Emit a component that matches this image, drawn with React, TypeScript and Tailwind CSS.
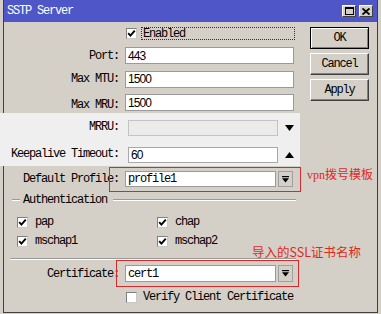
import React from "react";

const lbl = "text-[12px] tracking-[-1.2px] leading-none text-black whitespace-nowrap";

function Box({ checked = true }: { checked?: boolean }) {
  return (
    <span className="w-[11px] h-[11px] shrink-0 bg-white border border-t-[#808080] border-l-[#808080] border-b-[#c8c8c8] border-r-[#c8c8c8] flex items-center justify-center">
      {checked && (
        <svg width="9" height="9" viewBox="0 0 9 9">
          <path d="M1.2 4.2 L3.4 6.6 L7.8 1.6" fill="none" stroke="#000" strokeWidth="1.9" />
        </svg>
      )}
    </span>
  );
}

function DropBtn({ h }: { h: string }) {
  return (
    <div className={`ml-[2px] w-[15px] ${h} bg-[#d4d0c8] border border-[#a0a0a0] flex items-center justify-center`}>
      <svg width="7" height="7" viewBox="0 0 7 7">
        <rect x="0" y="0" width="7" height="1.2" fill="#000" />
        <path d="M0 2.3 H7 L3.5 6.5 Z" fill="#000" />
      </svg>
    </div>
  );
}

function Etched({ cls }: { cls: string }) {
  return <div className={`h-[2px] border-t border-t-[#9a9a9a] border-b border-b-white ${cls}`} />;
}

export default function App() {
  return (
    <div className="relative w-[381px] h-[314px] overflow-hidden bg-[#d4d0c8] font-['Liberation_Mono','Noto_Sans_CJK_SC',monospace]">
      <div className="ml-[3px] w-[375px] h-[313px] border-l border-r border-b border-[#404040] bg-[#d4d0c8] flex flex-col">
        {/* title bar */}
        <div className="h-[22px] bg-[#4f57c8] flex items-center justify-between pl-[3px] pr-[4px]">
          <span className="text-white text-[12px] tracking-[-1.2px] leading-none">SSTP Server</span>
          <div className="flex gap-[3px]">
            <div className="w-[14px] h-[12px] bg-[#d4d0c8] border border-t-white border-l-white border-b-[#404040] border-r-[#404040] flex items-center justify-center">
              <svg width="9" height="8" viewBox="0 0 9 8">
                <rect x="0.5" y="0.5" width="8" height="7" fill="none" stroke="#000" />
                <rect x="0" y="0" width="9" height="2" fill="#000" />
              </svg>
            </div>
            <div className="w-[14px] h-[12px] bg-[#d4d0c8] border border-t-white border-l-white border-b-[#404040] border-r-[#404040] flex items-center justify-center">
              <svg width="8" height="7" viewBox="0 0 8 7">
                <path d="M0.5 0.5 L7.5 6.5 M7.5 0.5 L0.5 6.5" stroke="#000" strokeWidth="1.8" />
              </svg>
            </div>
          </div>
        </div>

        {/* body */}
        <div className="flex flex-1">
          {/* form column */}
          <div className="w-[306px] flex flex-col">
            <div className="mt-[1px] h-[21px] flex items-center pl-[122px]">
              <Box />
              <div className="ml-[4px] w-[154px] h-[13px] border border-dotted border-[#333] flex items-center pl-[1px]">
                <span className={lbl}>Enabled</span>
              </div>
            </div>

            {[
              ["Port:", "443", "h-[23px] items-center"],
              ["Max MTU:", "1500", "h-[24px] items-center"],
              ["Max MRU:", "1500", "h-[22px] items-end pb-[2px]"],
            ].map(([l, v, c]) => (
              <div key={l} className={`flex ${c}`}>
                <span className={`${lbl} w-[115px] text-right`}>{l}</span>
                <div className="ml-[6px] w-[169px] h-[17px] bg-white border border-[#9a9a9a] flex items-center pl-[2px]">
                  <span className="font-['Liberation_Sans',sans-serif] text-[12px] tracking-[-0.9px] leading-none">{v}</span>
                </div>
              </div>
            ))}

            {/* lighter pasted region */}
            <div className="-ml-[4px] w-[300px] h-[53px] bg-[#efefef] flex flex-col relative">
              <div className="h-[27px] flex items-end pb-[4px]">
                <span className={`${lbl} w-[119px] text-right pb-[3px]`}>MRRU:</span>
                <div className="ml-[9px] w-[150px] h-[16px] bg-[#ebebeb] border border-[#c4c4c4]" />
                <div className="w-[22px] h-[16px] flex items-center justify-center">
                  <svg width="9" height="6" viewBox="0 0 9 6">
                    <path d="M0 0 H9 L4.5 6 Z" fill="#000" />
                  </svg>
                </div>
              </div>
              <div className="h-[26px] flex items-end pb-[3px]">
                <span className={`${lbl} w-[119px] text-right pb-[3px]`}>Keepalive Timeout:</span>
                <div className="ml-[9px] w-[150px] h-[16px] bg-white border border-[#a8a8a8] flex items-center pl-[2px]">
                  <span className="font-['Liberation_Sans',sans-serif] text-[12px] tracking-[-0.9px] leading-none">60</span>
                </div>
                <div className="w-[22px] h-[16px] flex items-center justify-center">
                  <svg width="9" height="6" viewBox="0 0 9 6">
                    <path d="M0 6 H9 L4.5 0 Z" fill="#000" />
                  </svg>
                </div>
              </div>
            </div>

            <div className="h-[26px] flex items-center">
              <span className={`${lbl} w-[115px] text-right`}>Default Profile:</span>
              <div className="ml-[6px] w-[151px] h-[16px] bg-white border border-[#9a9a9a] flex items-center pl-[2px]">
                <span className={lbl}>profile1</span>
              </div>
              <DropBtn h="h-[16px]" />
            </div>

            <div className="h-[16px] flex items-center pl-[8px] pr-[14px]">
              <Etched cls="w-[8px]" />
              <span className={`${lbl} ml-[3px]`}>Authentication</span>
              <Etched cls="ml-[6px] flex-1" />
            </div>

            <div className="mt-[4px] pl-[13px] grid grid-cols-[140px_1fr] grid-rows-[20px_18px]">
              {["pap", "chap", "mschap1", "mschap2"].map((t) => (
                <div key={t} className="flex items-center">
                  <Box />
                  <span className={`${lbl} ml-[7px]`}>{t}</span>
                </div>
              ))}
            </div>

            <Etched cls="mt-[8px] ml-[6px] mr-[14px]" />

            <div className="h-[27px] flex items-center">
              <span className={`${lbl} w-[115px] text-right`}>Certificate:</span>
              <div className="ml-[6px] w-[151px] h-[17px] bg-white border border-[#9a9a9a] flex items-center pl-[2px]">
                <span className={lbl}>cert1</span>
              </div>
              <DropBtn h="h-[17px]" />
            </div>

            <div className="h-[20px] flex items-center pl-[122px]">
              <Box checked={false} />
              <span className={`${lbl} ml-[6px]`}>Verify Client Certificate</span>
            </div>
          </div>

          {/* buttons column */}
          <div className="pt-[5px] flex flex-col gap-[4px]">
            <div className="w-[59px] h-[22px] border border-black bg-[#d4d0c8] shadow-[inset_1px_1px_#fff,inset_-1px_-1px_#808080] flex items-center justify-center">
              <span className={lbl}>OK</span>
            </div>
            {["Cancel", "Apply"].map((b) => (
              <div key={b} className="w-[59px] h-[22px] border border-t-white border-l-white border-b-[#404040] border-r-[#404040] bg-[#d4d0c8] shadow-[inset_-1px_-1px_#808080] flex items-center justify-center">
                <span className={lbl}>{b}</span>
              </div>
            ))}
          </div>
        </div>
      </div>

      {/* annotations */}
      <div className="absolute left-[109px] top-[167px] w-[192px] h-[25px] border border-[#d42a2a]" />
      <div className="absolute left-[116px] top-[260px] w-[183px] h-[27px] border border-[#d42a2a]" />
      <span className="absolute left-[307px] top-[167px] text-[12px] leading-[16px] text-[#e0281e] font-['Liberation_Serif','Noto_Sans_CJK_SC',serif] whitespace-nowrap">
        vpn拨号模板
      </span>
      <span className="absolute left-[252px] top-[244px] text-[12.5px] leading-[16px] text-[#e0281e] font-['Noto_Sans_CJK_SC',sans-serif] whitespace-nowrap">
        导入的SSL证书名称
      </span>
    </div>
  );
}
